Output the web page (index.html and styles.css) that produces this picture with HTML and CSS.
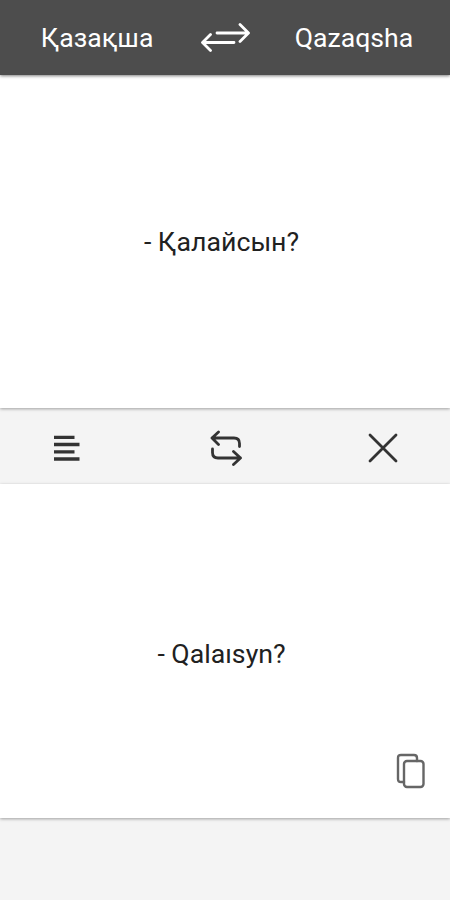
FILE: index.html
```
<!DOCTYPE html>
<html lang="kk">
<head>
  <meta charset="UTF-8">
  <meta name="viewport" content="width=device-width, initial-scale=1.0">
  <title>Қазақша - Qazaqsha</title>
  <link rel="stylesheet" href="styles.css">
</head>
<body>
  <div class="page">
    <header>
      <div class="lang">Қазақша</div>
      <svg class="swap" viewBox="0 0 50 30" width="50" height="30">
        <path d="M17 10H48M40 1.5L48.5 10L40 18.5M34 19.5H3M10.5 11.5L2.5 19.5L10.5 27.5"/>
      </svg>
      <div class="lang">Qazaqsha</div>
    </header>
    <main>
      <section class="panel source">
        <p>- Қалайсын?</p>
      </section>
      <div class="toolbar">
        <svg class="lines" viewBox="0 0 26 26" width="26" height="26">
          <path d="M0 2.3H20.5M0 9.5H25.5M0 16.8H20.5M0 24H25.5"/>
        </svg>
        <svg class="repeat" viewBox="0 0 32 36" width="32" height="36">
          <path d="M2 8H24Q29.5 8 29.5 13.5V16.5M8.5 2L2 8L8.5 14.5M2.5 19V22.5Q2.5 28 8 28H30.5M23.5 21.5L30.5 28L23.5 34.5"/>
        </svg>
        <svg class="close" viewBox="0 0 30 30" width="30" height="30">
          <path d="M2 2L28 28M28 2L2 28"/>
        </svg>
      </div>
      <section class="panel result">
        <p>- Qalaısyn?</p>
        <svg class="copy" viewBox="0 0 30 36" width="30" height="36">
          <path d="M8 29H5Q2 29 2 26V5Q2 2 5 2H18Q21 2 21 5V8"/>
          <rect x="8" y="8" width="19.5" height="26" rx="3"/>
        </svg>
      </section>
    </main>
  </div>
</body>
</html>
```

FILE: styles.css
```
* { margin: 0; padding: 0; box-sizing: border-box; }
body {
  font-family: Roboto, sans-serif;
  background: #f4f4f4;
  color: #212121;
}
.page {
  height: 900px;
  overflow: hidden;
}
header {
  position: relative;
  z-index: 1;
  display: grid;
  grid-template-columns: 194px 62px 196px;
  justify-items: center;
  align-items: center;
  height: 75px;
  background: #4d4d4d;
  color: #fff;
  box-shadow: 0 1px 3px rgba(0,0,0,0.5);
}
.lang {
  font-size: 26.6px;
  line-height: 30px;
}
svg {
  fill: none;
  stroke: #333;
  stroke-width: 2.8;
  stroke-linecap: round;
  stroke-linejoin: round;
}
.swap { stroke: #fff; }
.panel {
  display: flex;
  justify-content: center;
  align-items: center;
  position: relative;
  background: #fff;
  padding-right: 7px;
  font-size: 26.7px;
  height: 334px;
  box-shadow: 0 1px 3px rgba(0,0,0,0.35);
}
.source { height: 333px; }
.result { padding-top: 6px; }
.toolbar {
  display: flex;
  justify-content: space-between;
  align-items: center;
  height: 76px;
  padding: 3px 52px 0 54px;
}
.lines {
  stroke-width: 3.3;
  stroke-linecap: butt;
}
.repeat { margin-left: 4px; }
.copy {
  position: absolute;
  right: 24px;
  bottom: 29px;
  stroke: #666;
  stroke-width: 2.4;
}
```
